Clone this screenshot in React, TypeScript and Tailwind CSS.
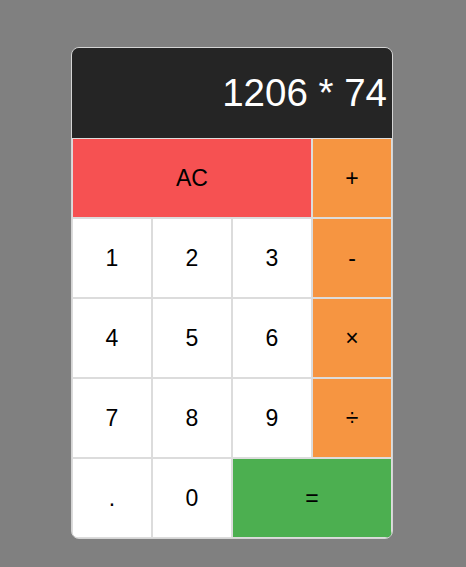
const keys: { label: string; cls: string }[] = [
  { label: "AC", cls: "col-span-3 bg-[#f65152]" },
  { label: "+", cls: "bg-[#f69541]" },
  { label: "1", cls: "bg-white" },
  { label: "2", cls: "bg-white" },
  { label: "3", cls: "bg-white" },
  { label: "-", cls: "bg-[#f69541]" },
  { label: "4", cls: "bg-white" },
  { label: "5", cls: "bg-white" },
  { label: "6", cls: "bg-white" },
  { label: "×", cls: "bg-[#f69541]" },
  { label: "7", cls: "bg-white" },
  { label: "8", cls: "bg-white" },
  { label: "9", cls: "bg-white" },
  { label: "÷", cls: "bg-[#f69541]" },
  { label: ".", cls: "bg-white" },
  { label: "0", cls: "bg-white" },
  { label: "=", cls: "col-span-2 bg-[#4caf50]" },
];

export default function App() {
  return (
    <div className="min-h-screen bg-[#808080] pt-[47px] font-['Liberation_Sans',Arial,sans-serif]">
      <div className="ml-[71px] w-[322px] overflow-hidden rounded-lg border border-[#d4d4d4]">
        <div className="flex h-[90px] items-center justify-end overflow-hidden whitespace-nowrap bg-[#252525] pr-[5px] text-[38.5px] text-white">
          1206 * 74
        </div>
        <div className="grid grid-cols-4">
          {keys.map((k) => (
            <button
              key={k.label}
              className={`h-20 border border-[#dcdcdc] text-[23px] text-black ${k.cls}`}
            >
              {k.label}
            </button>
          ))}
        </div>
      </div>
    </div>
  );
}
